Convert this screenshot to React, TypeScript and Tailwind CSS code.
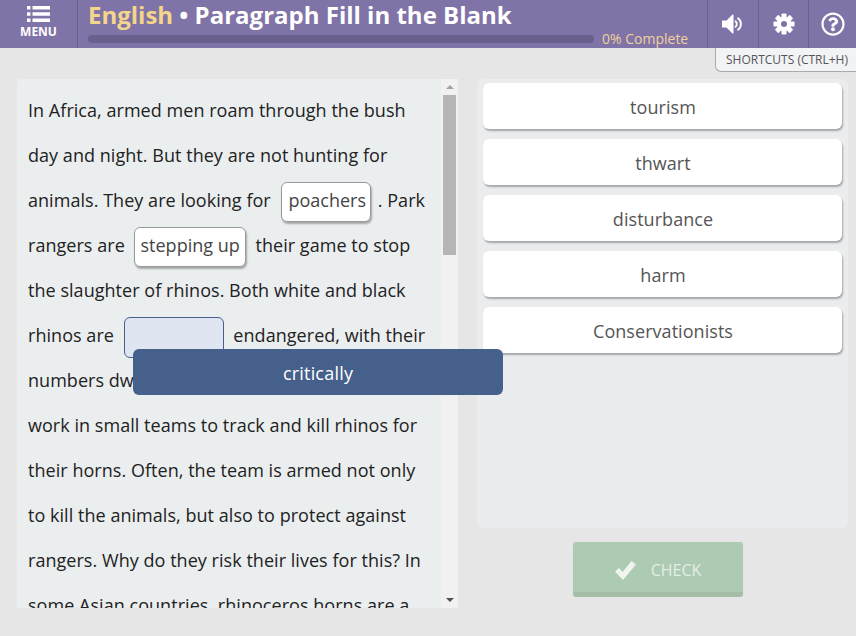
import React from "react";
import { FaRegQuestionCircle } from "react-icons/fa";

const words = ["tourism", "thwart", "disturbance", "harm", "Conservationists"];

const MenuIcon = () => (
  <svg width="23" height="16" viewBox="0 0 23 16" fill="currentColor">
    <rect x="0" y="0" width="3.5" height="3.5" />
    <rect x="5.5" y="0" width="17.5" height="3.5" />
    <rect x="0" y="6.25" width="3.5" height="3.5" />
    <rect x="5.5" y="6.25" width="17.5" height="3.5" />
    <rect x="0" y="12.5" width="3.5" height="3.5" />
    <rect x="5.5" y="12.5" width="17.5" height="3.5" />
  </svg>
);

const SpeakerIcon = () => (
  <svg width="20" height="20" viewBox="0 0 20 20" fill="none">
    <path d="M0 6.5h4.5L10.5 .5a.8 .8 0 0 1 1 .5v18a.8 .8 0 0 1-1 .5L4.5 13.5H0Z" fill="currentColor" />
    <path d="M13.5 7.2a3.6 3.6 0 0 1 0 5.6" stroke="currentColor" strokeWidth="1.8" strokeLinecap="round" />
    <path d="M16 4.2a7.2 7.2 0 0 1 0 11.6" stroke="currentColor" strokeWidth="1.8" strokeLinecap="round" />
  </svg>
);

// chunky eight tooth gear, the package's cog has too thin a ring
const GearIcon = () => (
  <svg width="22" height="22" viewBox="0 0 22 22" fill="currentColor">
    {[0, 45, 90, 135, 180, 225, 270, 315].map((angle) => (
      <rect key={angle} x="8.5" y="0.5" width="5" height="6" rx="0.8" transform={`rotate(${angle} 11 11)`} />
    ))}
    <path
      fillRule="evenodd"
      d="M11 4a7 7 0 1 0 0 14a7 7 0 1 0 0-14ZM11 8a3 3 0 1 1 0 6a3 3 0 1 1 0-6Z"
    />
  </svg>
);

const CheckIcon = () => (
  <svg width="21" height="19" viewBox="0 0 21 19" fill="#eff4ef">
    <path d="M0 10.5 L4 7 L7.5 11 L16.5 0 L21 3.5 L8 19 Z" strokeLinejoin="round" />
  </svg>
);

const Filled = ({ text, spacing }: { text: string; spacing: string }) => (
  <span
    className={`inline-block h-[40px] rounded-[6px] border border-[#999] bg-white pl-[6px] align-middle leading-[35px] tracking-normal text-[#444] shadow-[1px_2px_2px_rgba(0,0,0,0.3)] ${spacing}`}
  >
    {text}
  </span>
);

const App = () => {
  return (
    <div className="relative h-[636px] w-[856px] overflow-hidden bg-[#e6e6e6] font-['Open_Sans',sans-serif] text-[#222]">
      <header className="flex h-[48px] bg-[#8073a7]">
        <div className="flex w-[78px] flex-col items-center border-r border-[#6c6091] pt-[6px] text-white">
          <MenuIcon />
          <span className="mt-[1px] text-[12px] font-bold leading-[18px]">MENU</span>
        </div>
        <div className="min-w-0 flex-1 pl-[10px]">
          <h1 className="text-[24px] font-bold leading-[30px] text-white">
            <span className="text-[#f4d68a]">English</span> • Paragraph Fill in the Blank
          </h1>
          <div className="mt-[5px] flex items-center">
            <div className="h-[8px] w-[506px] rounded-full bg-[#6a5f8d]" />
            <span className="ml-[8px] text-[14px] leading-[8px] text-[#eed29a]">0% Complete</span>
          </div>
        </div>
        <div className="flex h-[48px] w-[51px] items-center justify-center border-l border-[#6c6091] pr-[2px] text-white">
          <SpeakerIcon />
        </div>
        <div className="flex h-[48px] w-[50px] items-center justify-center border-l border-[#6c6091] text-white">
          <GearIcon />
        </div>
        <div className="flex h-[48px] w-[48px] items-center justify-center border-l border-[#6c6091] text-white">
          <FaRegQuestionCircle className="h-[24px] w-[24px]" />
        </div>
      </header>

      <div className="flex justify-end">
        <div className="h-[24px] w-[141px] rounded-bl-[6px] border-b border-l border-[#aaa] bg-[#f2f3f5] pl-[2px] text-center text-[12px] leading-[23px] text-[#555]">
          SHORTCUTS (CTRL+H)
        </div>
      </div>

      <main className="mt-[7px] flex items-start pl-[17px]">
        <section className="flex h-[529px] w-[441px] overflow-hidden rounded-tl-[4px] bg-[#ebeeef]">
          <div className="w-[424px] overflow-hidden pl-[11px] pr-[10px] pt-[9px]">
            <p className="text-[18px] leading-[45px] tracking-[0.04px]">
              In Africa, armed men roam through the bush day and night. But they are not hunting for animals. They are looking for{" "}
              <Filled text="poachers" spacing="ml-[6px] mr-[2px] pr-[4px]" /> . Park rangers are <Filled text="stepping up" spacing="ml-[4px] mr-[5px] pr-[5px]" /> their game to stop the slaughter of rhinos. Both white and black rhinos are{" "}
              <span className="mx-[5px] inline-block h-[41px] w-[100px] rounded-[6px] border border-[#46608c] bg-[#dfe6f1] align-middle" /> endangered, with their numbers dwindling fast. Poachers
              <br />
              work in small teams to track and kill rhinos for their horns. Often, the team is armed not only to kill the animals, but also to protect against rangers. Why do they risk their lives for this? In some Asian countries, rhinoceros horns are a
            </p>
          </div>
          <div className="flex w-[17px] flex-col items-center bg-[#f1f1f1]">
            <span className="mt-[6px] h-0 w-0 border-x-[4px] border-b-[4px] border-x-transparent border-b-[#a3a3a3]" />
            <div className="mt-[6px] h-[160px] w-[13px] bg-[#b5b5b5]" />
            <span className="mt-auto mb-[6px] h-0 w-0 border-x-[4px] border-t-[4px] border-x-transparent border-t-[#505050]" />
          </div>
        </section>

        <div className="ml-[19px] w-[371px]">
          <section className="flex h-[449px] flex-col gap-[10px] rounded-[6px] bg-[#ebecee] px-[6px] pt-[4px]">
            {words.map((word) => (
              <div
                key={word}
                className="h-[46px] rounded-[6px] bg-white pl-[1px] text-center text-[18px] leading-[48px] tracking-[0.05px] text-[#555] shadow-[1px_2px_2px_rgba(0,0,0,0.3)]"
              >
                {word}
              </div>
            ))}
          </section>
          <button className="ml-[96px] mt-[14px] flex h-[55px] w-[170px] items-center justify-center gap-[15px] rounded-[3px] border-b-[5px] border-[#a5bea7] bg-[#adcab3] pt-[6px] text-[16px] text-[#e3eee5]">
            <CheckIcon />
            CHECK
          </button>
        </div>
      </main>

      <div className="absolute left-[133px] top-[349px] h-[46px] w-[370px] rounded-[6px] bg-[#46608c] text-center text-[18px] leading-[48px] tracking-[0.2px] text-white">
        critically
      </div>
    </div>
  );
};

export default App;
